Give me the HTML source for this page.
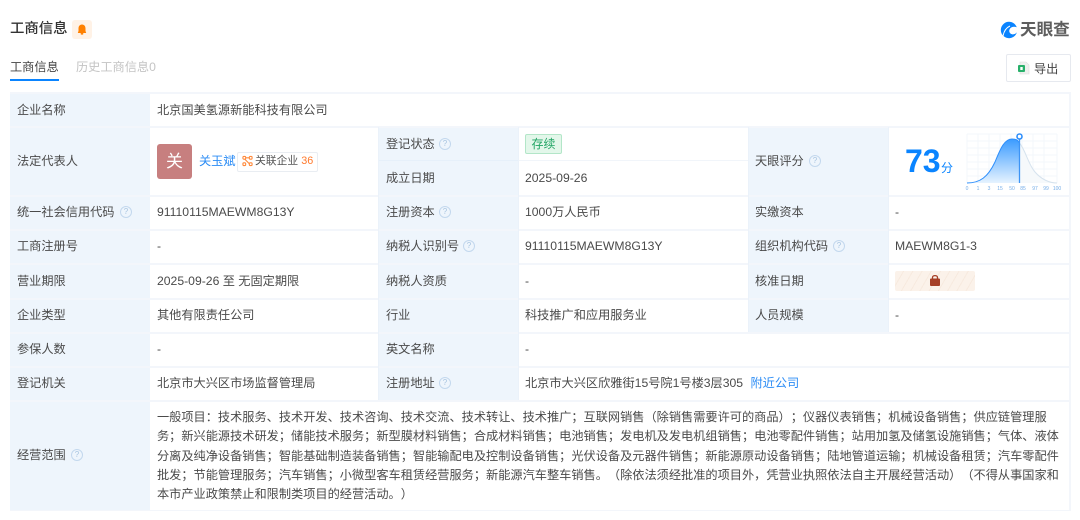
<!DOCTYPE html>
<html lang="zh"><head><meta charset="utf-8"><title>工商信息</title>
<style>
html,body{margin:0;padding:0;width:1080px;height:520px;overflow:hidden;background:#fff}
body{position:relative;font-family:"Liberation Sans","Noto Sans CJK SC",sans-serif;color:#444;text-spacing-trim:space-all;filter:blur(.3px)}
.t{position:absolute;font-size:12.2px;line-height:18px;white-space:nowrap;color:#4a4a4a}
.l{position:absolute;background:#eef5fc}
.h{position:absolute;left:10px;width:1060px;height:2px;background:#f3f6fb}
.v{position:absolute;width:1px;background:#ebf2fa}
.q{position:absolute;width:10px;height:10px;border:1px solid #c3d8ee;border-radius:50%;font-size:8px;line-height:10px;text-align:center;color:#a8c4e0}
</style></head><body>
<div class="t" style="left:10px;top:19px;font-size:14.4px;line-height:20px;color:#333;font-weight:500">工商信息</div>
<div style="position:absolute;left:72px;top:20px;width:20px;height:19px;background:#fff2e6;border-radius:3px"></div>
<svg style="position:absolute;left:77px;top:24px" width="10" height="11" viewBox="0 0 10 11"><path d="M5 .5C2.600 .5 1.500 2.400 1.500 4.500V7L.8 9H9.200L8.500 7V4.500C8.500 2.400 7.400 .5 5 .5Z" fill="#ff8000"/><rect x="3.600" y="9" width="2.800" height="1.600" rx=".8" fill="#ff8000"/></svg>
<div class="t" style="left:10px;top:58px;color:#444">工商信息</div>
<div style="position:absolute;left:10px;top:79px;width:49px;height:2px;background:#0a84ff"></div>
<div class="t" style="left:76px;top:58px;color:#c4c4c4">历史工商信息0</div>
<svg style="position:absolute;left:1000px;top:21px" width="18" height="18" viewBox="0 0 18 18"><path d="M9 .8A8.200 8.200 0 1 0 16.900 11.300C15.200 13.700 12.300 13.800 10.600 12.600 8.900 11.300 8.800 9 10.300 7.200 11.800 5.500 14.500 5.300 16.800 6.300 15.500 3 12.500.8 9 .8Z" fill="#0a84ff"/><path d="M3 15C4 10 6.500 6.500 10 5" stroke="#fff" stroke-width="1" fill="none"/></svg>
<div class="t" style="left:1020px;top:19px;font-size:16.600px;line-height:21px;color:#5e5e5e;font-weight:700">天眼查</div>
<div style="position:absolute;left:1006px;top:54px;width:63px;height:26px;border:1px solid #e6e9ef;border-radius:2px"></div>
<svg style="position:absolute;left:1017px;top:61px" width="13" height="14" viewBox="0 0 13 14"><path d="M3 1H9L12 4V13H3Z" fill="#eef0ee" stroke="#ddd" stroke-width=".6"/><rect x="1" y="4" width="7" height="7" rx="1" fill="#28b06a"/><rect x="3.300" y="6" width="2.400" height="3" fill="#fff"/></svg>
<div class="t" style="left:1034px;top:60px;color:#444">导出</div>

<div class="l" style="left:10px;top:93px;width:140px;height:417px"></div>
<div class="l" style="left:378px;top:127px;width:140px;height:273px"></div>
<div class="l" style="left:748px;top:127px;width:140px;height:205px"></div>
<div class="h" style="top:92px"></div><div class="h" style="top:126px"></div><div class="h" style="top:195px"></div><div class="h" style="top:229px"></div><div class="h" style="top:263px"></div><div class="h" style="top:298px"></div><div class="h" style="top:332px"></div><div class="h" style="top:366px"></div><div class="h" style="top:400px"></div><div class="h" style="top:510px;height:1px"></div>
<div style="position:absolute;left:518px;top:160px;width:230px;height:1px;background:#f1f5fa"></div>
<div style="position:absolute;left:378px;top:160px;width:140px;height:1px;background:#e6f0fa"></div>
<div style="position:absolute;left:1069px;top:92px;width:2px;height:419px;background:#f3f6fb"></div>
<div class="v" style="left:378px;top:127px;height:273px"></div><div class="v" style="left:518px;top:127px;height:273px"></div><div class="v" style="left:748px;top:127px;height:205px"></div><div class="v" style="left:888px;top:127px;height:205px"></div>

<div class="t" style="left:17px;top:101px">企业名称</div><div class="t" style="left:157px;top:101px">北京国美氢源新能科技有限公司</div>
<div class="t" style="left:17px;top:152px">法定代表人</div>
<div style="position:absolute;left:157px;top:144px;width:35px;height:35px;background:#c77f7f;border-radius:3px;color:#fff;font-size:17px;line-height:35px;text-align:center">关</div>
<div class="t" style="left:199px;top:152px;color:#2b8cf5">关玉斌</div>
<div style="position:absolute;left:237px;top:152px;width:79px;height:18px;border:1px solid #e9edf2;border-radius:2px"></div>
<svg style="position:absolute;left:242px;top:155px" width="11" height="12" viewBox="0 0 12 12" fill="none" stroke="#ff8a3c" stroke-width="1.200"><rect x="1" y="1" width="3" height="3" rx="1"/><rect x="8" y="1" width="3" height="3" rx="1"/><rect x="1" y="8" width="3" height="3" rx="1"/><rect x="8" y="8" width="3" height="3" rx="1"/><path d="M4 2.500H8M3 4L8 9"/></svg>
<div class="t" style="left:255px;top:152px;font-size:10.800px;color:#555">关联企业 <span style="color:#ff7a2d">36</span></div>

<div class="t" style="left:386px;top:135px">登记状态</div><div class="q" style="left:439px;top:138px">?</div>
<div style="position:absolute;left:525px;top:134px;width:35px;height:18px;background:#e3f7ea;border:1px solid #b3e6c8;border-radius:2px;color:#22a565;font-size:12px;line-height:18px;text-align:center">存续</div>
<div class="t" style="left:386px;top:169px">成立日期</div><div class="t" style="left:525px;top:169px">2025-09-26</div>
<div class="t" style="left:755px;top:152px">天眼评分</div><div class="q" style="left:809px;top:155px">?</div>
<div style="position:absolute;left:905px;top:142px;font-size:32px;line-height:38px;font-weight:700;color:#0a84ff">73</div>
<div class="t" style="left:941px;top:159px;font-size:12px;color:#0a84ff">分</div>
<svg style="position:absolute;left:962px;top:132px" width="104" height="60" viewBox="0 0 104 60">
<defs><linearGradient id="g" x1="0" y1="0" x2="0" y2="1"><stop offset="0" stop-color="#3a9bff"/><stop offset="1" stop-color="#e6f3ff"/></linearGradient></defs>
<path d="M5 2V51M16 2V51M27 2V51M38 2V51M49 2V51M60 2V51M71 2V51M82 2V51M95 2V51M5 2H95M5 9H95M5 16H95M5 23H95M5 30H95M5 37H95M5 44H95" stroke="#f3f7fb" stroke-width="1" fill="none"/>
<path d="M57.500 11C64 19 66 32 73 40C79 47 87 51 95 51H57.500Z" fill="#f6f9fb"/>
<path d="M57.500 11C64 19 66 32 73 40C79 47 87 51 95 51" stroke="#d6e3ee" stroke-width="1" fill="none"/>
<path d="M5 51C18 51 26 45 33 30C38 18 42 7 50 7C54 7 56 8 57.500 11V51Z" fill="url(#g)"/>
<path d="M5 51C18 51 26 45 33 30C38 18 42 7 50 7C54 7 56 8 57.500 11" stroke="#2f8ffb" stroke-width="1" fill="none"/>
<path d="M57.500 7V51" stroke="#3d94f5" stroke-width="1.300"/>
<circle cx="57.500" cy="4.500" r="2.500" fill="#fff" stroke="#2f8ffb" stroke-width="1.600"/>
<text y="58" font-size="5" fill="#77aee8" font-family="Liberation Sans" text-anchor="middle"><tspan x="5">0</tspan><tspan x="16">1</tspan><tspan x="27">3</tspan><tspan x="38">15</tspan><tspan x="50">50</tspan><tspan x="61">85</tspan><tspan x="73">97</tspan><tspan x="84">99</tspan><tspan x="95">100</tspan></text>
</svg>

<div class="t" style="left:17px;top:203px">统一社会信用代码</div><div class="q" style="left:120px;top:206px">?</div><div class="t" style="left:157px;top:203px">91110115MAEWM8G13Y</div>
<div class="t" style="left:386px;top:203px">注册资本</div><div class="q" style="left:439px;top:206px">?</div><div class="t" style="left:525px;top:203px">1000万人民币</div>
<div class="t" style="left:755px;top:203px">实缴资本</div><div class="t" style="left:895px;top:203px">-</div>
<div class="t" style="left:17px;top:237px">工商注册号</div><div class="t" style="left:157px;top:237px">-</div>
<div class="t" style="left:386px;top:237px">纳税人识别号</div><div class="q" style="left:463px;top:240px">?</div><div class="t" style="left:525px;top:237px">91110115MAEWM8G13Y</div>
<div class="t" style="left:755px;top:237px">组织机构代码</div><div class="q" style="left:833px;top:240px">?</div><div class="t" style="left:895px;top:237px">MAEWM8G1-3</div>
<div class="t" style="left:17px;top:272px">营业期限</div><div class="t" style="left:157px;top:272px">2025-09-26 至 无固定期限</div>
<div class="t" style="left:386px;top:272px">纳税人资质</div><div class="t" style="left:525px;top:272px">-</div>
<div class="t" style="left:755px;top:272px">核准日期</div>
<div style="position:absolute;left:895px;top:271px;width:80px;height:20px;border-radius:2px;background:repeating-linear-gradient(120deg,#fbf2ea 0 7px,#f7eadf 7px 8px)"></div>
<svg style="position:absolute;left:929px;top:274px" width="12" height="13" viewBox="0 0 12 13"><path d="M3.500 5V3.500C3.500 1 8.500 1 8.500 3.500V5" stroke="#a63f26" stroke-width="1.300" fill="none"/><rect x="1" y="4.500" width="10" height="7.500" rx="1" fill="#a63f26"/></svg>
<div class="t" style="left:17px;top:306px">企业类型</div><div class="t" style="left:157px;top:306px">其他有限责任公司</div>
<div class="t" style="left:386px;top:306px">行业</div><div class="t" style="left:525px;top:306px">科技推广和应用服务业</div>
<div class="t" style="left:755px;top:306px">人员规模</div><div class="t" style="left:895px;top:306px">-</div>
<div class="t" style="left:17px;top:340px">参保人数</div><div class="t" style="left:157px;top:340px">-</div>
<div class="t" style="left:386px;top:340px">英文名称</div><div class="t" style="left:525px;top:340px">-</div>
<div class="t" style="left:17px;top:374px">登记机关</div><div class="t" style="left:157px;top:374px">北京市大兴区市场监督管理局</div>
<div class="t" style="left:386px;top:374px">注册地址</div><div class="q" style="left:439px;top:377px">?</div><div class="t" style="left:525px;top:374px">北京市大兴区欣雅街15号院1号楼3层305 <span style="color:#2b8cf5;margin-left:4px">附近公司</span></div>
<div class="t" style="left:17px;top:446px">经营范围</div><div class="q" style="left:71px;top:449px">?</div>
<div class="t" style="left:157px;top:408px;line-height:19.300px">一般项目：技术服务、技术开发、技术咨询、技术交流、技术转让、技术推广；互联网销售（除销售需要许可的商品）；仪器仪表销售；机械设备销售；供应链管理服<br>务；新兴能源技术研发；储能技术服务；新型膜材料销售；合成材料销售；电池销售；发电机及发电机组销售；电池零配件销售；站用加氢及储氢设施销售；气体、液体<br>分离及纯净设备销售；智能基础制造装备销售；智能输配电及控制设备销售；光伏设备及元器件销售；新能源原动设备销售；陆地管道运输；机械设备租赁；汽车零配件<br>批发；节能管理服务；汽车销售；小微型客车租赁经营服务；新能源汽车整车销售。（除依法须经批准的项目外，凭营业执照依法自主开展经营活动）（不得从事国家和<br>本市产业政策禁止和限制类项目的经营活动。）</div>
</body></html>
